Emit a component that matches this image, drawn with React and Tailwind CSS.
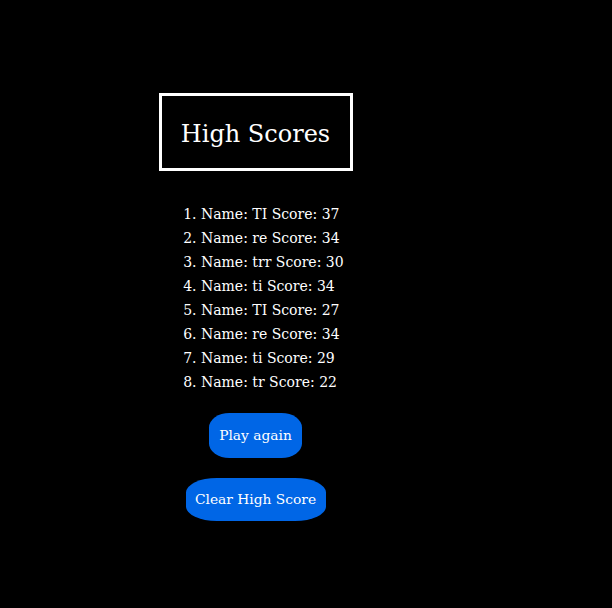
const scores = [
  { name: "TI", score: 37 },
  { name: "re", score: 34 },
  { name: "trr", score: 30 },
  { name: "ti", score: 34 },
  { name: "TI", score: 27 },
  { name: "re", score: 34 },
  { name: "ti", score: 29 },
  { name: "tr", score: 22 },
];

export default function App() {
  return (
    <div className="min-h-[608px] w-full bg-black text-white font-['Georgia','DejaVu_Serif',serif]">
      <div className="flex w-[511px] flex-col items-center pt-[93px]">
        <div className="flex h-[78px] w-[194px] items-center justify-center border-[3px] border-white pt-[3px]">
          <h1 className="text-[24px] leading-none">High Scores</h1>
        </div>

        <ol className="mt-[31px] list-decimal self-start pl-[201px] text-[14px] leading-[24px]">
          {scores.map((s, i) => (
            <li key={i}>
              Name: {s.name} Score: {s.score}
            </li>
          ))}
        </ol>

        <button className="mt-[19px] h-[45px] w-[93px] rounded-[22%/32%] bg-[#0066e6] text-[13.8px] text-white">
          Play again
        </button>
        <button className="mt-[20px] h-[43px] w-[140px] rounded-[22%/34%] bg-[#0066e6] text-[13.8px] text-white">
          Clear High Score
        </button>
      </div>
    </div>
  );
}
